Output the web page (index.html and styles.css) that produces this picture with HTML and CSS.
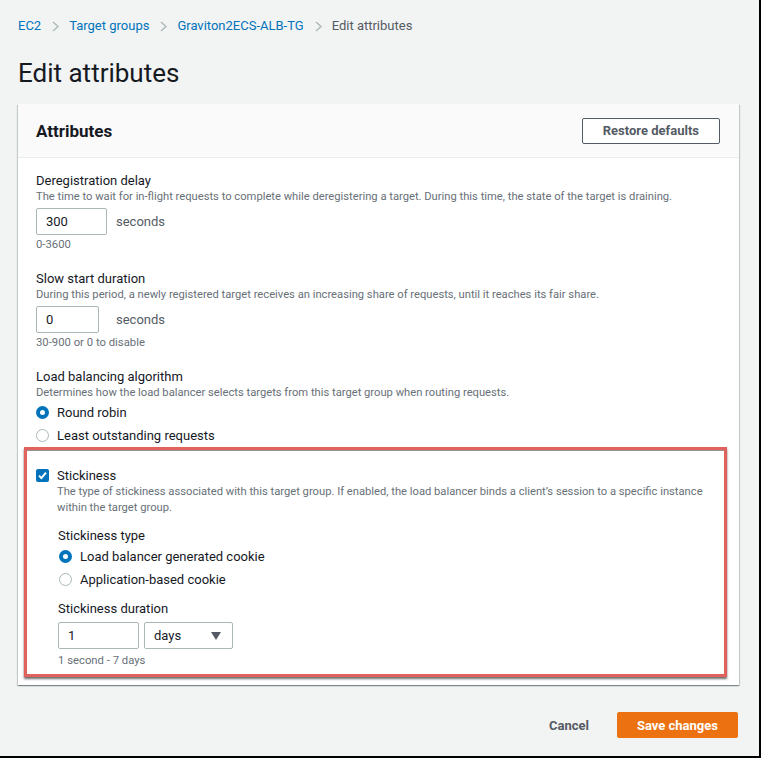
FILE: index.html
```html
<!DOCTYPE html>
<html lang="en">
<head>
<meta charset="utf-8">
<title>Edit attributes</title>
<link rel="stylesheet" href="styles.css">
</head>
<body>
<div class="frame">
  <nav class="crumbs">
    <a class="crumb-link">EC2</a>
    <svg class="chev" width="7" height="11" viewBox="0 0 7 11"><path d="M1 1l5 4.5L1 10" fill="none" stroke="#aab7b8" stroke-width="1.3"/></svg>
    <a class="crumb-link">Target groups</a>
    <svg class="chev" width="7" height="11" viewBox="0 0 7 11"><path d="M1 1l5 4.5L1 10" fill="none" stroke="#aab7b8" stroke-width="1.3"/></svg>
    <a class="crumb-link">Graviton2ECS-ALB-TG</a>
    <svg class="chev" width="7" height="11" viewBox="0 0 7 11"><path d="M1 1l5 4.5L1 10" fill="none" stroke="#aab7b8" stroke-width="1.3"/></svg>
    <span class="crumb-current">Edit attributes</span>
  </nav>

  <h1 class="page-title">Edit attributes</h1>

  <section class="card">
    <header class="card-header">
      <h2 class="card-title">Attributes</h2>
      <button class="btn-normal">Restore defaults</button>
    </header>
    <div class="card-body">
      <div class="field">
        <div class="label">Deregistration delay</div>
        <div class="desc">The time to wait for in-flight requests to complete while deregistering a target. During this time, the state of the target is draining.</div>
        <div class="input-row">
          <div class="input w71">300</div>
          <span class="unit">seconds</span>
        </div>
        <div class="hint">0-3600</div>
      </div>

      <div class="field">
        <div class="label">Slow start duration</div>
        <div class="desc">During this period, a newly registered target receives an increasing share of requests, until it reaches its fair share.</div>
        <div class="input-row">
          <div class="input w63">0</div>
          <span class="unit unit-far">seconds</span>
        </div>
        <div class="hint">30-900 or 0 to disable</div>
      </div>

      <div class="field">
        <div class="label">Load balancing algorithm</div>
        <div class="desc">Determines how the load balancer selects targets from this target group when routing requests.</div>
        <div class="radio-row"><span class="radio on"></span><span class="radio-label">Round robin</span></div>
        <div class="radio-row"><span class="radio"></span><span class="radio-label">Least outstanding requests</span></div>
      </div>

      <div class="highlight">
        <div class="check-row">
          <span class="checkbox"><svg width="13" height="13" viewBox="0 0 13 13"><path d="M3 6.6l2.4 2.5L10 3.6" fill="none" stroke="#fff" stroke-width="2"/></svg></span>
          <div class="check-text">
            <div class="label">Stickiness</div>
            <div class="desc">The type of stickiness associated with this target group. If enabled, the load balancer binds a client’s session to a specific instance within the target group.</div>
          </div>
        </div>
        <div class="nested">
          <div class="label sub-label">Stickiness type</div>
          <div class="radio-group">
            <div class="radio-row"><span class="radio on"></span><span class="radio-label">Load balancer generated cookie</span></div>
            <div class="radio-row"><span class="radio"></span><span class="radio-label">Application-based cookie</span></div>
          </div>
          <div class="label dur-label">Stickiness duration</div>
          <div class="input-row dur-row">
            <div class="input w81">1</div>
            <div class="input select w89"><span>days</span><svg width="10" height="8" viewBox="0 0 10 8"><path d="M0 0h10L5 8z" fill="#545b64"/></svg></div>
          </div>
          <div class="hint">1 second - 7 days</div>
        </div>
      </div>
    </div>
  </section>

  <div class="actions">
    <button class="btn-link">Cancel</button>
    <button class="btn-primary">Save changes</button>
  </div>
</div>
</body>
</html>
```

FILE: styles.css
```css
* { box-sizing: border-box; }

html, body {
  margin: 0;
  padding: 0;
  background: #000;
}

body {
  font-family: Roboto, "Noto Sans", "Liberation Sans", Arial, sans-serif;
  color: #16191f;
  width: 761px;
  height: 758px;
  overflow: hidden;
}

.frame {
  width: 759px;
  height: 756px;
  background: #f2f3f3;
  display: flex;
  flex-direction: column;
}

/* breadcrumbs */
.crumbs {
  display: flex;
  align-items: center;
  padding: 17px 18px 0;
  height: 35px;
  font-size: 13px;
  line-height: 18px;
}

.crumb-link { color: #0073bb; }

.crumb-current { color: #545b64; }

.chev { margin: 0 10px 0 11px; }

.page-title {
  margin: 22px 0 0 18px;
  font-size: 26px;
  line-height: 32px;
  font-weight: 400;
  color: #16191f;
}

/* card */
.card {
  margin: 15px 20px 0 18px;
  background: #fff;
  box-shadow: 0 1px 1px 0 rgba(0, 28, 36, 0.3), 1px 1px 1px 0 rgba(0, 28, 36, 0.15), -1px 1px 1px 0 rgba(0, 28, 36, 0.15);
}

.card-header {
  height: 54px;
  display: flex;
  align-items: center;
  justify-content: space-between;
  padding: 0 19px 0 18px;
  background: #fafafa;
  border-bottom: 1px solid #eaeded;
}

.card-title {
  margin: 0;
  font-size: 17px;
  font-weight: 700;
  color: #16191f;
}

.btn-normal {
  height: 26px;
  padding: 0 20px;
  background: #fff;
  border: 1px solid #545b64;
  border-radius: 2px;
  font-family: inherit;
  font-size: 13px;
  font-weight: 700;
  color: #545b64;
}

.card-body {
  padding: 14px 18px 8px;
}

.field + .field { margin-top: 17px; }

.label {
  font-size: 13px;
  line-height: 17px;
  color: #16191f;
}

.desc {
  font-size: 11.2px;
  line-height: 16px;
  color: #687078;
}

.hint {
  margin-top: 2px;
  font-size: 11.3px;
  line-height: 16px;
  color: #687078;
}

.input-row {
  display: flex;
  align-items: center;
  margin-top: 3px;
}

.input {
  height: 27px;
  border: 1px solid #aab7b8;
  border-radius: 2px;
  background: #fff;
  padding: 0 9px;
  font-size: 13px;
  line-height: 25px;
  color: #16191f;
}

.w71 { width: 71px; }
.w63 { width: 63px; }
.w81 { width: 81px; }
.w89 { width: 89px; }

.unit {
  margin-left: 9px;
  font-size: 13px;
  color: #545b64;
}

.unit-far { margin-left: 17px; }

.select {
  margin-left: 5px;
  display: flex;
  align-items: center;
  justify-content: space-between;
  padding-right: 11px;
}

/* radios */
.radio-row {
  display: flex;
  align-items: center;
  height: 23px;
}

.radio {
  width: 13px;
  height: 13px;
  border-radius: 50%;
  border: 1px solid #aab7b8;
  background: #fff;
  flex: none;
}

.radio.on {
  border: 4px solid #0073bb;
}

.radio-label {
  margin-left: 8px;
  font-size: 13px;
  color: #16191f;
}

/* highlight box */
.highlight {
  margin: 0 -6px 0 -12px;
  border: 3px solid #e1625d;
  padding: 17px 9px 5px;
  box-shadow: 0 2px 2px rgba(50, 50, 50, 0.7), inset 0 1px 0 rgba(60, 60, 60, 0.55);
}

.check-row {
  display: flex;
  align-items: flex-start;
}

.checkbox {
  width: 13px;
  height: 13px;
  margin-top: 2px;
  border-radius: 2px;
  background: #0073bb;
  flex: none;
  display: flex;
}

.check-text { margin-left: 8px; }

.nested { padding-left: 22px; }

.sub-label { margin-top: 11px; }

.radio-group {
  margin-top: 1px;
  padding-left: 1px;
}

.dur-label { margin-top: 9px; }

.dur-row { margin-top: 5px; }

.nested .hint { margin-top: 4px; }

/* actions */
.actions {
  display: flex;
  justify-content: flex-end;
  align-items: center;
  margin-top: 27px;
  padding-right: 21px;
}

.btn-link {
  background: none;
  border: none;
  font-family: inherit;
  font-size: 13px;
  font-weight: 700;
  color: #545b64;
  padding: 0 20px;
  height: 26px;
  margin-right: 8px;
}

.btn-primary {
  height: 26px;
  padding: 0 19px;
  background: #ec7211;
  border: 1px solid #ec7211;
  border-radius: 2px;
  font-family: inherit;
  font-size: 13px;
  font-weight: 700;
  color: #fff;
}
```
